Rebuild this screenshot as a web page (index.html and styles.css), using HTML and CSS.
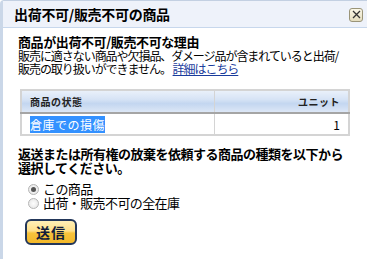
FILE: index.html
```html
<!DOCTYPE html>
<html lang="ja">
<head>
    <meta charset="UTF-8">
    <title>出荷不可/販売不可の商品</title>
    <link rel="stylesheet" href="styles.css">
</head>
<body>
    <div class="dialog">
        <div class="dialog-header">
            <h1 class="dialog-title">出荷不可/販売不可の商品</h1>
            <button class="close-btn" aria-label="閉じる">
                <svg width="9" height="9" viewBox="0 0 9 9"><path d="M1 1L8 8M8 1L1 8" stroke="#333" stroke-width="1.3"/></svg>
            </button>
        </div>

        <div class="dialog-body">
            <h2 class="reason-title">商品が出荷不可/販売不可な理由</h2>
            <p class="reason-text">
                販売に適さない商品や欠損品、ダメージ品が含まれていると出荷/<br>販売の取り扱いができません。 <a href="#" class="more-link">詳細はこちら</a>
            </p>

            <table class="items">
                <thead>
                    <tr>
                        <th class="col-state">商品の状態</th>
                        <th class="col-unit">ユニット</th>
                    </tr>
                </thead>
                <tbody>
                    <tr>
                        <td class="col-state"><span class="selected">倉庫での損傷</span></td>
                        <td class="col-unit">1</td>
                    </tr>
                </tbody>
            </table>

            <p class="question">返送または所有権の放棄を依頼する商品の種類を以下から<br>選択してください。</p>

            <div class="choices">
                <label class="choice"><span class="radio checked"></span>この商品</label>
                <label class="choice"><span class="radio"></span>出荷・販売不可の全在庫</label>
            </div>

            <button class="submit-btn">送信</button>
        </div>
    </div>
</body>
</html>
```

FILE: styles.css
```css
* {
    margin: 0;
    padding: 0;
    box-sizing: border-box;
}

body {
    font-family: "Noto Sans CJK JP", "Noto Sans", sans-serif;
    background: white;
    color: #000;
    width: 367px;
    height: 259px;
    overflow: hidden;
}

.dialog {
    height: 259px;
    border-left: 3px solid #cad7e8;
    border-top: 1px solid #c3d0e2;
    border-top-left-radius: 4px;
}

.dialog-header {
    height: 27px;
    background: #eef2fa;
    border-bottom: 1px solid #c7d7ec;
    display: flex;
    align-items: center;
    justify-content: space-between;
    padding: 0 4px 0 11px;
}

.dialog-title {
    font-size: 14px;
    font-weight: 700;
    letter-spacing: -0.3px;
    line-height: 16px;
}

.close-btn {
    width: 14px;
    height: 14px;
    border: 1px solid #9a9478;
    border-radius: 3px;
    background: linear-gradient(#fbf8e8, #e4ddbf);
    display: flex;
    align-items: center;
    justify-content: center;
    margin-top: 1px;
}

.dialog-body {
    padding: 7px 0 0 15px;
}

.reason-title {
    font-size: 13px;
    font-weight: 700;
    line-height: 14px;
    letter-spacing: -0.4px;
}

.reason-text {
    font-size: 12px;
    line-height: 13px;
    letter-spacing: -1.05px;
}

.more-link {
    color: #1a3c9c;
    text-decoration: underline;
}

.items {
    width: 330px;
    margin: 14px 0 0 2px;
    border-collapse: collapse;
    border: 2px solid #d4d4d4;
    font-size: 11px;
}

.items th {
    height: 23px;
    background: linear-gradient(#e9f0fa 0%, #d6e3f5 40%, #c3d6f0 60%, #dce7f6 100%);
    border-bottom: 2px solid #a5a5a5;
    font-weight: 700;
    font-size: 10px;
    color: #222;
    letter-spacing: 0.5px;
    padding: 0 8px;
}

.items td {
    height: 22px;
    padding: 0 8px;
    font-size: 12px;
}

.items .col-state {
    text-align: left;
    width: 193px;
    border-right: 1px solid #d4d4d4;
}

.items .col-unit {
    text-align: right;
}

.selected {
    background: #3391ff;
    color: white;
    letter-spacing: 0.5px;
}

.question {
    font-size: 13px;
    font-weight: 700;
    line-height: 14px;
    letter-spacing: -0.5px;
    margin-top: 11px;
}

.choices {
    display: flex;
    flex-direction: column;
    margin: 7px 0 0 10px;
}

.choice {
    display: flex;
    align-items: center;
    gap: 4px;
    font-size: 13px;
    line-height: 14px;
    letter-spacing: -0.6px;
}

.radio {
    width: 11px;
    height: 11px;
    border-radius: 50%;
    border: 1px solid #b5b5b5;
    background: radial-gradient(circle, #fdfdfd, #e2e2e2);
    display: inline-flex;
    align-items: center;
    justify-content: center;
}

.radio.checked::after {
    content: "";
    width: 5px;
    height: 5px;
    border-radius: 50%;
    background: #555;
}

.submit-btn {
    margin: 9px 0 0 7px;
    width: 52px;
    height: 26px;
    border: 2px solid #23375a;
    border-radius: 6px;
    background: linear-gradient(#fff0b8 0%, #ffe08a 45%, #f7c33c 55%, #f2b82a 100%);
    font-family: inherit;
    font-size: 14px;
    font-weight: 700;
    color: #111c3a;
    letter-spacing: 1px;
}
```
